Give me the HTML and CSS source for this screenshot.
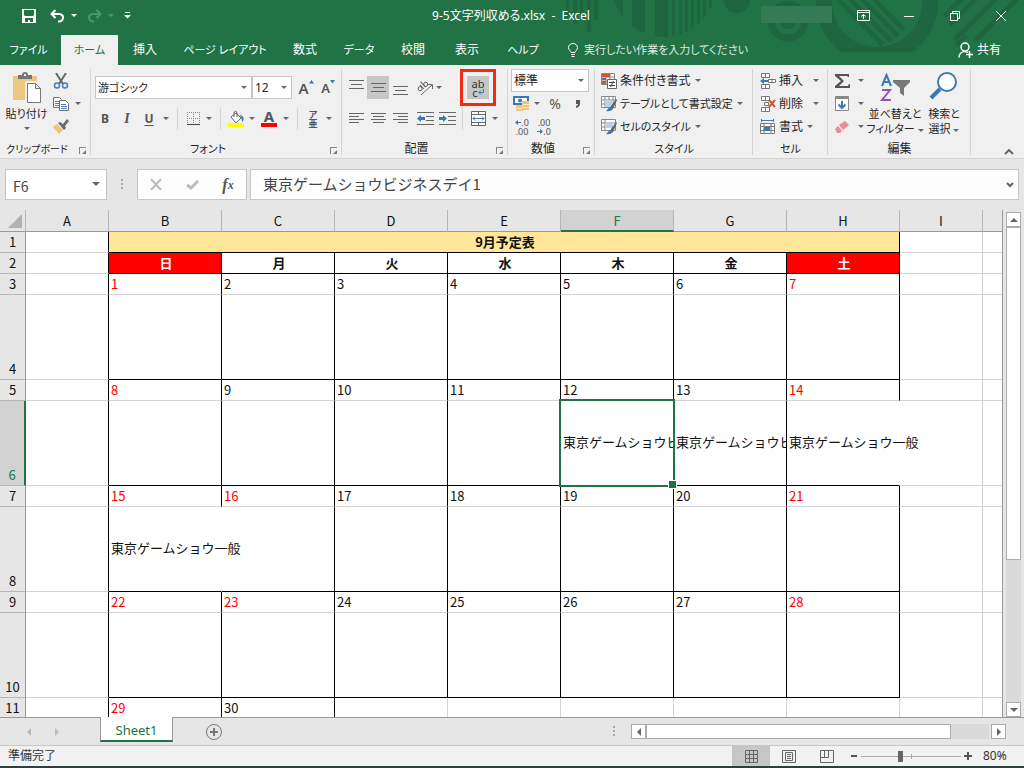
FILE: index.html
```html
<!DOCTYPE html>
<html lang="ja">
<head>
<meta charset="utf-8">
<title>9-5文字列収める.xlsx - Excel</title>
<link rel="stylesheet" href="styles.css">
</head>
<body>
<div class="app">
<header class="top">
  <svg class="deco" width="520" height="56" viewBox="504 0 520 56" fill="#1e6540">
    <path d="M566 0h3v17h-3zM573 0h4v24h-4zM580 0h3v20h-3zM587 0h4v32h-4zM594 0h4v20h-4z"/>
    <clipPath id="disc"><circle cx="664" cy="-15" r="52"/></clipPath>
    <g clip-path="url(#disc)"><path d="M613 0h10v40h-10zM632 0h13v40h-13zM655 0h13v40h-13zM672 0h3v40h-3zM679 0h3v40h-3zM685 0h3v40h-3zM691 0h3v40h-3zM697 0h3v40h-3zM703 0h3v40h-3zM709 0h3v40h-3z"/></g>
    <circle cx="737" cy="0" r="13"/>
    <circle cx="788" cy="21" r="17" fill="none" stroke="#1e6540" stroke-width="7"/><circle cx="788" cy="21" r="8"/>
    <clipPath id="cut"><path d="M800 0h150v52H800z"/></clipPath>
    <g clip-path="url(#cut)"><circle cx="877" cy="2" r="53" fill="none" stroke="#1e6540" stroke-width="16"/></g>
    <path d="M836 0h6l43 43-5 3zM848 0h6l40 40-5 3zM860 0h6l34 34-4 4zM872 0h6l28 28-4 4z"/>
    <path d="M943 14l14-14h7l-18 18zM948 23l23-23h7l-27 27zM953 38l38-38h7l-42 42zM974 38l38-38h7l-42 42zM955 44l10-10 3 3-10 10z"/>
    <path d="M761 6h71v17h-71z" fill="#347a55"/>
  </svg>
  <div class="titlebar">
    <div class="quick">
      <button class="qb save" aria-label="上書き保存"><svg width="14" height="14" viewBox="0 0 14 14"><path fill="#fff" fill-rule="evenodd" d="M0 0h14v14H0zM2 1v5l1 1h8l1-1V1zM3 9v4h3v-2h2v2h3V9z"/></svg></button>
      <button class="qb" aria-label="元に戻す"><svg width="15" height="14" viewBox="0 0 15 14" fill="none" stroke="#fff" stroke-width="2"><path d="M5.500 1L1.500 5l4 4M2 5h7c6 0 5 8-1 7.500"/></svg></button><i class="caret white"></i>
      <button class="qb redo" aria-label="やり直し"><svg width="15" height="14" viewBox="0 0 15 14" fill="none" stroke="#4e9370" stroke-width="2"><path d="M9.500 1l4 4-4 4M13 5H6C0 5 1 13 7 12.500"/></svg></button><i class="caret dim"></i>
      <button class="qb more" aria-label="クイック アクセス"><svg width="7" height="7" viewBox="0 0 7 7" fill="#fff"><path d="M1 0h5v1H1zM0 3h7L3.500 6.500z"/></svg></button>
    </div>
    <h1>9-5文字列収める.xlsx&nbsp; - &nbsp;Excel</h1>
    <div class="win">
      <button aria-label="リボンの表示"><svg width="13" height="11" viewBox="0 0 13 11" fill="none" stroke="#fff"><path d="M.5.5h12v10H.5zM0 2.500h13M6.500 9V4.500M4 6.500l2.500-2 2.500 2"/></svg></button>
      <button aria-label="最小化"><svg width="10" height="10" viewBox="0 0 10 10"><path d="M0 5.500h10" stroke="#fff"/></svg></button>
      <button aria-label="元に戻す (縮小)"><svg width="10" height="10" viewBox="0 0 10 10" fill="none" stroke="#fff"><path d="M.5 2.500h7v7h-7zM2.500 2.500v-2h7v7h-2"/></svg></button>
      <button aria-label="閉じる"><svg width="10" height="10" viewBox="0 0 10 10" stroke="#fff"><path d="M0 0l10 10M10 0L0 10"/></svg></button>
    </div>
  </div>
  <nav class="tabs">
    <button class="t-file kana">ファイル</button><button class="t-home on kana">ホーム</button><button class="t-2">挿入</button><button class="t-layout kana">ページ レイアウト</button><button class="t-2">数式</button><button class="t-2 kana">データ</button><button class="t-2">校閲</button><button class="t-2">表示</button><button class="t-help kana">ヘルプ</button>
    <button class="tell kana"><svg width="10" height="14" viewBox="0 0 10 14" fill="none" stroke="#fff"><path d="M3 9.500C3 8 .5 7 .5 4.500a4.500 4 0 0 1 9 0C9.500 7 7 8 7 9.500zM3 11.500h4M3.500 13.500h3"/></svg>実行したい作業を入力してください</button>
    <button class="share"><svg width="15" height="16" viewBox="0 0 15 16" fill="none" stroke="#fff" stroke-width="1.500"><circle cx="7" cy="5" r="4"/><path d="M1 15.500c0-4 3-6 6-6 1.500 0 2 .5 3 1M8 12.500h7M11.500 9v7"/></svg>共有</button>
  </nav>
</header>

<section class="ribbon">
  <div class="group g-clip">
    <div class="body">
      <button class="big paste kana"><svg width="28" height="31" viewBox="0 0 28 31"><path fill="#ecc57f" d="M0 4h24v24H0z"/><path fill="#767676" d="M5 3h4a3 3 0 0 1 6 0h4v4H5z"/><path fill="#f0f0f0" d="M11 2h2v2h-2zM12 9h16v22H12z"/><path fill="#fff" stroke="#777" d="M14.500 11.500h8l5 5v14h-13zM22.500 11.500v5h5"/></svg><span>貼り付け</span><i class="caret"></i></button>
      <div class="stack">
        <button class="line" aria-label="切り取り"><svg width="16" height="16" viewBox="0 0 16 16" fill="none"><path d="M3 0l7 11M13 0L6 11" stroke="#666" stroke-width="2"/><circle cx="4" cy="12.500" r="2.500" stroke="#4a7fb5" stroke-width="1.500"/><circle cx="12" cy="12.500" r="2.500" stroke="#4a7fb5" stroke-width="1.500"/></svg></button>
        <div class="line"><button aria-label="コピー"><svg width="16" height="14" viewBox="0 0 16 14" fill="#fff" stroke="#707070"><path d="M.5.5h6l2 2v8h-8z"/><path d="M2 4.500h4M2 6.500h4M2 8.500h4" stroke="#4a7fb5"/><path d="M6.500 3.500h6l3 3v7h-9z"/><path d="M8 7.500h5M8 9.500h6M8 11.500h6" stroke="#4a7fb5"/></svg></button><i class="caret"></i></div>
        <button class="line" aria-label="書式のコピー"><svg width="16" height="15" viewBox="0 0 16 15"><path d="M0 8l4-3 6 6-4 4z" fill="#ecc57f"/><path d="M5 4l2-1 3 2 4-5 2 2-4 5 1 2-2 2z" fill="#6a6a6a"/></svg></button>
      </div>
    </div>
    <div class="label small">クリップボード<i class="launch"></i></div>
  </div>

  <div class="group g-font">
    <div class="body rows">
      <div class="row">
        <label class="drop fname kana"><select aria-label="フォント名"><option>游ゴシック</option></select></label><label class="drop fsize"><select aria-label="フォント サイズ"><option>12</option></select></label>
        <button class="ic grow" aria-label="拡大"><b class="a1">A</b><svg width="5" height="4" viewBox="0 0 5 4"><path d="M0 3.500L2.500 0 5 3.500z" fill="#3d78b4"/></svg></button>
        <button class="ic grow" aria-label="縮小"><b class="a2">A</b><svg width="5" height="4" viewBox="0 0 5 4"><path d="M0 0h5L2.500 3.500z" fill="#3d78b4"/></svg></button>
      </div>
      <div class="row">
        <button class="ic bold">B</button><button class="ic ital">I</button><button class="ic under">U</button><i class="caret slot"></i><i class="sep"></i>
        <button class="ic20" aria-label="罫線"><svg width="13" height="13" viewBox="0 0 13 13" stroke="#888" stroke-dasharray="1 1"><path d="M.5 0v12M6.500 0v12M12.500 0v12M0 .5h13M0 6.500h13"/><path d="M0 12.500h13" stroke="#444" stroke-dasharray="none"/></svg></button><i class="caret slot"></i><i class="sep"></i>
        <button class="ic20" aria-label="塗りつぶし"><svg width="16" height="16" viewBox="0 0 16 16"><path d="M3 6l5-4 5 5-5 5z" fill="#fff" stroke="#666"/><path d="M6 6V2a1.500 1.500 0 0 1 3 0v4" fill="none" stroke="#666"/><path d="M12 4c5 1 4 6 2 7 0-3-1-4-2-7z" fill="#3d78b4"/><path d="M0 12h16v4H0z" fill="#ff0"/></svg></button><i class="caret slot"></i>
        <button class="ic fcolor">A</button><i class="caret slot"></i><i class="sep"></i>
        <button class="ic20 ruby"><span>ア</span><span>亜</span></button><i class="caret slot"></i>
      </div>
    </div>
    <div class="label kana">フォント<i class="launch"></i></div>
  </div>

  <div class="group g-align">
    <div class="body rows">
      <div class="row">
        <button class="ic" aria-label="上揃え"><svg width="15" height="15" viewBox="0 0 15 15" stroke="#666"><path d="M0 .5h15M2 4.500h11M0 8.500h15"/></svg></button><button class="ic pressed" aria-label="上下中央"><svg width="15" height="15" viewBox="0 0 15 15" stroke="#666"><path d="M0 3.500h15M2 7.500h11M0 11.500h15"/></svg></button><button class="ic" aria-label="下揃え"><svg width="15" height="15" viewBox="0 0 15 15" stroke="#666"><path d="M0 6.500h15M2 10.500h11M0 14.500h15"/></svg></button>
        <button class="ic orient" aria-label="方向"><svg width="18" height="16" viewBox="0 0 18 16" fill="none" stroke="#666"><path d="M5 15L16 5M12 4.500h4.500V9"/><g transform="rotate(-42 6 7)"><circle cx="3.500" cy="7" r="2"/><path d="M6 4v5.500M8.500 2v7.500"/><circle cx="10.500" cy="7.500" r="2"/></g></svg></button><i class="caret slot tight"></i><i class="gapper"></i>
        <button class="ic pressed wrap" aria-label="折り返して全体を表示する"><span>ab</span><span>c<svg width="6" height="6" viewBox="0 0 6 6" fill="none" stroke="#3d78b4"><path d="M5.500 0v3.500H1M3 1.500L1 3.500l2 2"/></svg></span><i class="mark"></i></button>
      </div>
      <div class="row">
        <button class="ic" aria-label="左揃え"><svg width="15" height="11" viewBox="0 0 15 11" stroke="#666"><path d="M0 .5h15M0 3.500h10M0 6.500h15M0 9.500h10"/></svg></button><button class="ic" aria-label="中央揃え"><svg width="15" height="11" viewBox="0 0 15 11" stroke="#666"><path d="M0 .5h15M2 3.500h11M0 6.500h15M2 9.500h11"/></svg></button><button class="ic" aria-label="右揃え"><svg width="15" height="11" viewBox="0 0 15 11" stroke="#666"><path d="M0 .5h15M5 3.500h10M0 6.500h15M5 9.500h10"/></svg></button>
        <button class="ic orient" aria-label="インデント減"><svg width="17" height="14" viewBox="0 0 17 14" stroke="#666"><path d="M0 .5h17M9 4.500h8M9 8.500h8M0 12.500h17"/><path d="M0 6.500L4 3v2h4v3H4v2z" fill="#3d78b4" stroke="none"/></svg></button><button class="ic" aria-label="インデント増"><svg width="17" height="14" viewBox="0 0 17 14" stroke="#666"><path d="M0 .5h17M9 4.500h8M9 8.500h8M0 12.500h17"/><path d="M8 6.500L4 3v2H0v3h4v2z" fill="#3d78b4" stroke="none"/></svg></button><i class="sep s4"></i>
        <button class="ic" aria-label="セルを結合"><svg width="15" height="15" viewBox="0 0 15 15" fill="#fff" stroke="#666"><path d="M.5.5h14v14H.5zM0 3.500h15M0 11.500h15M7.500 0v3.500M7.500 11.500V15"/><path d="M2 7.500h11M4 5.500l-2 2 2 2M11 5.500l2 2-2 2" fill="none" stroke="#3d78b4"/></svg></button><i class="caret slot"></i>
      </div>
    </div>
    <div class="label">配置<i class="launch"></i></div>
  </div>

  <div class="group g-num">
    <div class="body rows r3">
      <label class="drop fmt"><select aria-label="表示形式"><option>標準</option></select></label>
      <div class="row"><button class="ic20" aria-label="通貨"><svg width="16" height="15" viewBox="0 0 16 15"><path d="M1 1h14v7H1z" fill="#fff" stroke="#3d78b4" stroke-width="2"/><circle cx="7" cy="4.500" r="2" fill="#3d78b4"/><path d="M9 5h7v9H9zM3 9h7v6H3z" fill="#ecc57f"/><path d="M9 8.500h7M9 11.500h7M3 12.500h6" stroke="#f7ead0"/></svg></button><i class="caret slot"></i><button class="ic pct">%</button><button class="ic" aria-label="桁区切り"><svg width="6" height="8" viewBox="0 0 6 8"><path d="M1 0h4v3c0 3-1 4-4 5V6c1-.5 2-1 2-2H1z" fill="#555"/></svg></button></div>
      <div class="row"><button class="ic dec"><span><svg width="6" height="5" viewBox="0 0 6 5"><path d="M0 2.500L3 0v2h3v1H3v2z" fill="#3d78b4"/></svg>.0</span><span>.00</span></button><button class="ic dec"><span>.00</span><span><svg width="6" height="5" viewBox="0 0 6 5"><path d="M6 2.500L3 0v2H0v1h3v2z" fill="#3d78b4"/></svg>.0</span></button></div>
    </div>
    <div class="label">数値<i class="launch"></i></div>
  </div>

  <div class="group g-style">
    <div class="body rows r3">
      <button class="cmd"><svg width="16" height="16" viewBox="0 0 16 16"><path d="M.5.5h13v11H.5zM5 0v12M9 0v12M0 4h14M0 8h14" fill="#fff" stroke="#888"/><path d="M1 1h8v3H1zM1 8h4v3H1z" fill="#d35230"/><path d="M1 5h4v2H1z" fill="#3d78b4"/><path d="M6.500 6.500h9v9h-9z" fill="#fff" stroke="#666"/><path d="M8 9.500h6M8 12.500h6M12.500 8l-3 6" stroke="#444"/></svg>条件付き書式<i class="caret"></i></button>
      <button class="cmd kana"><svg width="16" height="16" viewBox="0 0 16 16"><path d="M.5.5h14v11H.5zM4 0v12M8 0v12M12 0v12M0 4h15M0 8h15" fill="#fff" stroke="#888"/><path d="M4 4h8v7H4z" fill="#b8d2ea"/><path d="M15 3l-5 7-3 4c3 1 5 0 6-3l3-7z" fill="#666"/><path d="M5 15c2-1 2-4 5-4 2 2 0 5-5 4z" fill="#3d78b4"/></svg>テーブルとして書式設定<i class="caret"></i></button>
      <button class="cmd kana"><svg width="16" height="16" viewBox="0 0 16 16"><path d="M.5.5h14v11H.5zM4 0v12M0 4h15M0 8h4" fill="#fff" stroke="#888"/><path d="M4 4h8v5H4z" fill="#b8d2ea"/><path d="M15 3l-5 7-3 4c3 1 5 0 6-3l3-7z" fill="#666"/><path d="M5 15c2-1 2-4 5-4 2 2 0 5-5 4z" fill="#3d78b4"/></svg>セルのスタイル<i class="caret"></i></button>
    </div>
    <div class="label kana">スタイル</div>
  </div>

  <div class="group g-cells">
    <div class="body rows r3">
      <button class="cmd wide"><svg width="16" height="16" viewBox="0 0 16 16" fill="#fff" stroke="#777"><path d="M1.500.5h8v4h-8zM5.500 0v4.500M1.500 11.500h8v4h-8zM5.500 11v4.500M8.500 6.500h7v3h-7zM12 6v4"/><path d="M0 8l4-3v2h4v2H4v2z" fill="#3d78b4" stroke="none"/></svg>挿入<i class="caret"></i></button>
      <button class="cmd wide"><svg width="16" height="16" viewBox="0 0 16 16" fill="#fff" stroke="#777"><path d="M1.500.5h8v4h-8zM5.500 0v4.500M1.500 11.500h8v4h-8zM5.500 11v4.500M4.500 6.500h4v3h-4z"/><path d="M9 4l6 7M15 4l-6 7" stroke="#d6532c" stroke-width="2"/></svg>削除<i class="caret"></i></button>
      <button class="cmd"><svg width="16" height="16" viewBox="0 0 16 16" fill="#fff" stroke="#777"><path d="M.5 4.500h14v10H.5zM4 4v11M11 4v11M0 7.500h15M0 11.500h15"/><path d="M4 8h6v4H4z" fill="#3d78b4" stroke="none"/><path d="M1 1.500h13M1.500 0v3M13.500 0v3" stroke="#3d78b4"/></svg>書式<i class="caret"></i></button>
    </div>
    <div class="label kana">セル</div>
  </div>

  <div class="group g-edit">
    <div class="body">
      <div class="rows r3 edit3">
        <button class="cmd ed" aria-label="合計"><svg width="16" height="14" viewBox="0 0 16 14"><path d="M0 0h14v3h-1L12 2H4l5 5-5 5h9l1-2h1v4H0v-2l6-5-6-5z" fill="#555"/></svg><i class="caret"></i></button>
        <button class="cmd ed" aria-label="フィル"><svg width="14" height="15" viewBox="0 0 14 15"><path d="M.5.5h13v14H.5z" fill="#fff" stroke="#888"/><path d="M1 1h12v2H1z" fill="#888"/><path d="M7 5v7M3.500 8.500L7 12l3.500-3.500" fill="none" stroke="#3d78b4" stroke-width="2"/></svg><i class="caret"></i></button>
        <button class="cmd ed" aria-label="クリア"><svg width="14" height="12" viewBox="0 0 14 12"><path d="M4 4l6-4 4 4-6 5z" fill="#ea8a9b"/><path d="M0 8l3-3 4 5-2 2H2z" fill="#ea8a9b"/></svg><i class="caret"></i></button>
      </div>
      <button class="big sort kana"><svg width="30" height="30" viewBox="0 0 30 30" fill="none"><path d="M2 13L6.500 2 11 13M3.500 9h6" stroke="#3d78b4" stroke-width="2"/><path d="M2 17h8L2 27h9" stroke="#9055b0" stroke-width="2"/><path d="M13 7h17v2l-6 6v8l-4-3v-5l-7-6z" fill="#777"/></svg><span>並べ替えと<br>フィルター<i class="caret"></i></span></button>
      <button class="big find kana"><svg width="30" height="30" viewBox="0 0 30 30" fill="none" stroke="#3d78b4"><circle cx="18" cy="11" r="9" fill="#fff" stroke-width="2"/><path d="M11 18L2 27" stroke-width="4"/></svg><span>検索と<br>選択<i class="caret"></i></span></button>
    </div>
    <div class="label">編集</div>
  </div>
  <button class="collapse" aria-label="リボンを折りたたむ"><svg width="10" height="6" viewBox="0 0 10 6" fill="none" stroke="#666" stroke-width="2"><path d="M1 5l4-4 4 4"/></svg></button>
</section>

<section class="fbar">
  <label class="drop namebox"><input aria-label="名前ボックス" value="F6"></label>
  <i class="dots"></i>
  <div class="fbtns">
    <button aria-label="キャンセル"><svg width="12" height="11" viewBox="0 0 12 11" stroke="#bbb" stroke-width="2"><path d="M1 0l10 11M11 0L1 11"/></svg></button>
    <button aria-label="入力"><svg width="13" height="10" viewBox="0 0 13 10" fill="none" stroke="#bbb" stroke-width="3"><path d="M1 5l4 3 7-7"/></svg></button>
    <button class="fx">f<small>x</small></button>
  </div>
  <div class="fin"><input aria-label="数式バー" value="東京ゲームショウビジネスデイ1"><svg width="8" height="6" viewBox="0 0 8 6" fill="none" stroke="#666" stroke-width="2"><path d="M1 1l3 3 3-3"/></svg></div>
</section>

<main class="sheet">
  <div class="gridwrap">
  <table class="grid">
    <colgroup><col class="c-h"><col class="c-a"><col class="c-d"><col class="c-d"><col class="c-d"><col class="c-d"><col class="c-d"><col class="c-d"><col class="c-d"><col class="c-a"><col></colgroup>
    <thead><tr><th class="corner"><svg width="14" height="14" viewBox="0 0 14 14"><path d="M14 0v14H0z" fill="#b2b2b2"/></svg></th><th>A</th><th>B</th><th>C</th><th>D</th><th>E</th><th class="cur">F</th><th>G</th><th>H</th><th>I</th><th></th></tr></thead>
    <tbody>
    <tr class="k"><th>1</th><td></td><td class="title" colspan="7">9月予定表</td><td></td><td></td></tr>
    <tr class="k days"><th>2</th><td></td><td class="hol">日</td><td>月</td><td>火</td><td>水</td><td>木</td><td>金</td><td class="hol">土</td><td></td><td></td></tr>
    <tr><th>3</th><td></td><td class="red">1</td><td>2</td><td>3</td><td>4</td><td>5</td><td>6</td><td class="red">7</td><td></td><td></td></tr>
    <tr class="k tall"><th>4</th><td></td><td></td><td></td><td></td><td></td><td></td><td></td><td></td><td></td><td></td></tr>
    <tr><th>5</th><td></td><td class="red">8</td><td>9</td><td>10</td><td>11</td><td>12</td><td>13</td><td class="red">14</td><td></td><td></td></tr>
    <tr class="k tall"><th class="cur">6</th><td></td><td></td><td></td><td></td><td></td><td class="sel"><div class="clip">東京ゲームショウビジネスデイ1</div><i class="cursor"></i></td><td><div class="clip">東京ゲームショウビジネスデイ2</div></td><td class="spill">東京ゲームショウ一般</td><td></td><td></td></tr>
    <tr><th>7</th><td></td><td class="red">15</td><td class="red">16</td><td>17</td><td>18</td><td>19</td><td>20</td><td class="red">21</td><td></td><td></td></tr>
    <tr class="k tall"><th>8</th><td></td><td class="spill">東京ゲームショウ一般</td><td></td><td></td><td></td><td></td><td></td><td></td><td></td><td></td></tr>
    <tr><th>9</th><td></td><td class="red">22</td><td class="red">23</td><td>24</td><td>25</td><td>26</td><td>27</td><td class="red">28</td><td></td><td></td></tr>
    <tr class="k tall"><th>10</th><td></td><td></td><td></td><td></td><td></td><td></td><td></td><td></td><td></td><td></td></tr>
    <tr class="last"><th>11</th><td></td><td class="red">29</td><td>30</td><td></td><td></td><td></td><td></td><td></td><td></td><td></td></tr>
    </tbody>
  </table>
  </div>
  <div class="vscroll"><button aria-label="上へ"><i class="tri up"></i></button><i class="thumb"></i><i class="track"></i><button aria-label="下へ"><i class="tri down"></i></button></div>
</main>

<section class="sheetbar">
  <div class="navs"><i class="tri left pale"></i><i class="tri right pale"></i></div>
  <button class="stab">Sheet1</button>
  <button class="add" aria-label="新しいシート"><svg width="16" height="16" viewBox="0 0 16 16" fill="none" stroke="#777"><circle cx="8" cy="8" r="7.500"/><path d="M8 4v8M4 8h8" stroke-width="2"/></svg></button>
  <i class="dots"></i>
  <div class="hscroll"><button aria-label="左へ"><i class="tri left"></i></button><i class="thumb"></i><i class="track"></i><button aria-label="右へ"><i class="tri right"></i></button></div>
</section>
<footer class="status">
  <span class="ready">準備完了</span>
  <button class="view on" aria-label="標準"><svg width="13" height="13" viewBox="0 0 13 13" fill="none" stroke="#666"><path d="M.5.5h12v12H.5zM4.500 0v13M8.500 0v13M0 4.500h13M0 8.500h13"/></svg></button>
  <button class="view" aria-label="ページ レイアウト"><svg width="14" height="13" viewBox="0 0 14 13" fill="none" stroke="#666"><path d="M.5.5h13v12H.5zM3.500 2.500h7v8h-7zM5 4.500h4M5 6.500h4M5 8.500h4"/></svg></button>
  <button class="view" aria-label="改ページ プレビュー"><svg width="14" height="13" viewBox="0 0 14 13" fill="none" stroke="#666"><path d="M.5.5h13v12H.5zM.5 7.500h8V.5M4.500 0v7.500"/></svg></button>
  <button class="zoomb" aria-label="縮小"><svg width="6" height="6" viewBox="0 0 6 6"><path d="M0 3h6" stroke="#555" stroke-width="2"/></svg></button>
  <input type="range" aria-label="ズーム" min="0" max="100" value="39">
  <button class="zoomb" aria-label="拡大"><svg width="8" height="8" viewBox="0 0 8 8"><path d="M0 4h8M4 0v8" stroke="#555" stroke-width="2"/></svg></button>
  <span class="pctv">80%</span>
</footer>
</div>
</body>
</html>
```
FILE: styles.css
```css
* { box-sizing: border-box; }
body {
  margin: 0;
  font-family: "Noto Sans", "Noto Sans CJK JP", sans-serif;
  font-size: 12px;
  line-height: 16px;
  color: #262626;
  font-feature-settings: "palt";
}
button, input, select {
  margin: 0; padding: 0; border: 0; background: none;
  font: inherit; color: inherit; font-feature-settings: inherit;
}
button { display: flex; align-items: center; justify-content: center; white-space: nowrap; }
svg { display: block; flex: none; }
i { font-style: normal; flex: none; }
.kana { font-size: 11px; }
.small { font-size: 10px; }

.app { display: flex; flex-direction: column; height: 100vh; min-width: 1000px; overflow: hidden; border-bottom: 2px solid #2c4040; }

/* title and tabs */
.top { position: relative; background: #217346; color: #fff; flex: none; }
.deco { position: absolute; right: 0; top: 0; }
.titlebar { position: relative; display: flex; align-items: center; height: 35px; padding-bottom: 4px; }
.quick { display: flex; align-items: center; flex: 1; padding-left: 22px; }
.qb + .caret { margin: 0 6px 0 6px; }
.qb.save { margin-right: 14px; }
.qb.redo { margin-left: 4px; }
.qb.more { margin-left: 4px; }
h1 { margin: 0 24px 0 0; font-size: 12px; font-weight: 400; white-space: nowrap; }
.win { display: flex; flex: 1; justify-content: flex-end; }
.win button { width: 46px; height: 24px; }
.tabs { position: relative; display: flex; height: 30px; }
.tabs button { justify-content: center; }
.t-file { width: 61px; padding-right: 4px; }
.t-home { width: 57px; }
.tabs .on { background: #f0f0f0; color: #217346; }
.t-2 { width: 54px; }
.t-layout { width: 106px; }
.t-help { width: 58px; }
.tabs .tell { margin-left: 16px; gap: 6px; color: #dcebe2; }
.tabs .share { margin-left: auto; margin-right: 23px; gap: 4px; }

.caret {
  display: inline-block; width: 0; height: 0;
  border: 3px solid transparent; border-top-color: #666; border-bottom: 0;
}
.caret.white { border-top-color: #fff; }
.caret.dim { border-top-color: #4e9370; }
.caret.slot { margin: 0 3px; }
.caret.tight { margin: 0; }

/* ribbon */
.ribbon { display: flex; flex: none; height: 94px; padding-top: 4px; background: #f0f0f0; border-bottom: 1px solid #d2d2d2; }
.group { display: flex; flex-direction: column; flex: none; position: relative; }
.group::after { content: ""; position: absolute; right: 0; top: 0; width: 1px; height: 86px; background: #d4d4d4; }
.g-clip { width: 91px; }
.g-font { width: 251px; }
.g-align { width: 166px; }
.g-num { width: 87px; }
.g-style { width: 158px; }
.g-cells { width: 75px; }
.g-edit { width: 143px; }
.body { display: flex; height: 71px; }
.body.rows { flex-direction: column; padding: 7px 0 0 3px; gap: 8px; }
.body.rows.r3, .rows.r3 { padding-top: 0; gap: 0; display: flex; flex-direction: column; }
.row { display: flex; align-items: center; height: 23px; }
.label { display: flex; justify-content: center; align-items: center; height: 18px; margin-top: 1px; padding-right: 17px; position: relative; }
.g-style .label, .g-cells .label, .g-edit .label { padding-right: 0; }
.launch { position: absolute; right: 5px; bottom: 4px; width: 7px; height: 7px; border-left: 1px solid #888; border-top: 1px solid #888; }
.launch::after { content: ""; position: absolute; right: 0; bottom: 0; border: 2px solid transparent; border-right-color: #777; border-bottom-color: #777; }
.ic { width: 22px; height: 23px; flex: none; color: #555; }
.ic20 { width: 20px; height: 23px; flex: none; }
.sep { width: 1px; height: 22px; margin: 0 5px; background: #d4d4d4; }
.s4 { margin: 0 4px; }
.gapper { width: 25px; }
.orient { margin-left: 3px; }
.pressed { background: #c6c6c6; }
.big { flex-direction: column; justify-content: flex-start; text-align: center; line-height: 15px; }
.big .caret { vertical-align: middle; }
.paste { width: 53px; padding-top: 3px; gap: 2px; }
.paste .caret { margin-top: 4px; }
.paste span { padding-top: 1px; }
.stack { display: flex; flex-direction: column; }
.line { display: flex; align-items: center; justify-content: flex-start; width: 34px; height: 23px; }
.line .caret { margin-left: 6px; }
.drop { position: relative; display: flex; background: #fff; border: 1px solid #c6c6c6; height: 23px; }
.drop::after { content: ""; position: absolute; right: 4px; top: 9px; border: 3px solid transparent; border-top-color: #666; border-bottom: 0; }
.drop select, .drop input { appearance: none; width: 100%; padding-left: 2px; outline: 0; }
.fname { width: 157px; margin-left: 1px; }
.fsize { width: 40px; margin-right: 3px; }
.fmt { width: 78px; height: 23px; }
.grow { align-items: center; gap: 0; }
.grow svg { align-self: flex-start; margin-top: 4px; }
.grow b { font-weight: 600; line-height: 20px; }
.a1 { font-size: 15px; }
.a2 { font-size: 13px; }
.bold { font-weight: 700; }
.ital { font-family: "Liberation Serif", serif; font-style: italic; font-weight: 700; font-size: 14px; }
.under { font-weight: 700; text-decoration: underline; text-underline-offset: 2px; }
.fcolor { width: 16px; height: 17px; margin: 0 3px; font-size: 15px; line-height: 13px; font-weight: 700; border-bottom: 4px solid #f00; }
.ruby { flex-direction: column; color: #555; line-height: 9px; font-size: 9px; font-weight: 700; }
.wrap { position: relative; flex-direction: column; font-size: 11px; line-height: 9px; color: #333; }
.wrap span { display: flex; align-items: center; }
.mark { position: absolute; inset: -7px; border: 3px solid #f32b12; }
.pct { font-size: 14px; width: 24px; }
.dec { flex-direction: column; font-size: 9px; line-height: 9px; align-items: center; }
.dec span { display: flex; align-items: center; }
.cmd { height: 23px; gap: 3px; justify-content: flex-start; padding-left: 3px; }
.cmd .caret { margin-left: 1px; }
.cmd.wide .caret { margin-left: 7px; }
.g-cells .cmd { padding-left: 4px; }
.edit3 { width: 40px; padding-left: 4px; }
.cmd.ed .caret { margin-left: auto; margin-right: 4px; }
.sort { width: 54px; padding-top: 4px; gap: 3px; }
.find { width: 44px; padding-top: 2px; gap: 5px; }
.big span .caret { margin-left: 3px; }
.collapse { margin: auto 10px 3px auto; }

/* formula bar */
.fbar { display: flex; flex: none; height: 51px; padding: 10px 5px; background: #e6e6e6; color: #444; font-family: "Noto Sans CJK JP", sans-serif; }
.fbar .namebox { width: 102px; height: 31px; }
.namebox::after { right: 6px; top: 12px; border-width: 4px 4px 0; }
.namebox input { padding: 2px 0 0 7px; font-size: 14px; }
.dots { width: 2px; height: 10px; margin: 10px 14px; background: repeating-linear-gradient(#aaa 0 2px, transparent 2px 4px); }
.fbtns { display: flex; width: 110px; background: #fdfdfd; border: 1px solid #c6c6c6; margin-right: 3px; }
.fbtns button { width: 36px; }
.fx { font-family: "Liberation Serif", serif; font-style: italic; font-weight: 700; font-size: 16px; color: #555; }
.fx small { font-size: 12px; }
.fin { display: flex; flex: 1; align-items: center; background: #fdfdfd; border: 1px solid #c6c6c6; padding: 0 4px 0 12px; }
.fin input { flex: 1; font-size: 15px; height: 26px; padding-bottom: 3px; outline: 0; font-feature-settings: normal; }

/* worksheet */
.sheet { display: flex; flex: 1; min-height: 0; background: #e6e6e6; font-family: "Noto Sans CJK JP", sans-serif; font-feature-settings: normal; }
.gridwrap { flex: 1; overflow: hidden; }
.grid { width: 100%; table-layout: fixed; border-collapse: separate; border-spacing: 0; background: #fff; font-size: 13px; line-height: 18px; border-right: 1px solid #999; color: #111; }
.c-h { width: 26px; }
.c-a { width: 83px; }
.c-d { width: 113px; }
.grid tr { height: 21px; }
.grid thead tr { height: 22px; }
.grid tr.tall { height: 85px; }
.grid th { padding: 0; font-weight: 400; background: #e6e6e6; border-right: 1px solid #b5b5b5; border-bottom: 1px solid #999; vertical-align: bottom; }
.grid thead th { vertical-align: middle; }
.grid thead th:last-child { border-right: 0; }
.grid tbody th { padding-bottom: 1px; border-right-color: #999; border-bottom-color: #b5b5b5; }
.grid .corner { padding-left: 8px; }
.grid .cur { background: #d2d2d2; color: #217346; }
.grid thead .cur { padding-top: 1px; border-bottom: 2px solid #217346; }
.grid tbody .cur { border-right: 2px solid #217346; }
.grid td { padding: 0 0 0 2px; border-right: 1px solid #000; border-bottom: 1px solid #d4d4d4; white-space: nowrap; }
.grid .k td { border-bottom-color: #000; }
.grid .tall td { padding-bottom: 2px; }
.grid tr td:nth-last-child(-n+2) { border-right-color: #d4d4d4; border-bottom-color: #d4d4d4; }
.grid td:last-child { border-right: 0; }
.grid tr.k th + td { border-bottom-color: #d4d4d4; }
.grid .last td:nth-child(n+5) { border-right-color: #d4d4d4; }
.grid .title { background: #ffe699; text-align: center; font-weight: 700; font-size: 13px; }
.grid .days td { text-align: center; font-weight: 700; }
.grid .hol { background: #f00; color: #fff; }
.grid .red { color: #f00; }
.grid .spill { border-right-color: transparent; overflow: visible; }
.clip { overflow: hidden; }
.sel { position: relative; }
.cursor { position: absolute; inset: -2px; border: 2px solid #217346; }
.cursor::after { content: ""; position: absolute; right: -4px; bottom: -4px; width: 7px; height: 7px; background: #217346; border: 1px solid #fff; }

.tri { display: block; width: 0; height: 0; border: 4px solid transparent; }
.up { border-bottom-color: #666; border-top: 0; }
.down { border-top-color: #666; border-bottom: 0; }
.left { border-right-color: #666; border-left: 0; }
.right { border-left-color: #666; border-right: 0; }
.left.pale { border-right-color: #bbb; }
.right.pale { border-left-color: #bbb; }
.vscroll { display: flex; flex-direction: column; width: 21px; padding: 2px 3px 0; }
.vscroll button, .hscroll button { flex: none; width: 15px; height: 15px; background: #fff; border: 1px solid #ababab; }
.thumb { background: #fff; border: 1px solid #ababab; }
.track { background: #dadada; }
.vscroll .thumb { flex: 333; }
.vscroll .track { flex: 143; }

.sheetbar { display: flex; flex: none; height: 28px; background: #e6e6e6; border-top: 1px solid #999; }
.navs { display: flex; align-items: center; gap: 24px; width: 100px; padding-left: 27px; }
.stab { width: 73px; height: 25px; margin-top: -1px; padding-top: 3px; background: #fff; color: #217346; font-size: 13px; border: 1px solid #999; border-top: 0; border-bottom: 2px solid #217346; }
.add { margin-left: 33px; }
.sheetbar .dots { margin: 8px 16px 0 auto; }
.hscroll { display: flex; width: 375px; height: 15px; margin: 6px 18px 0 0; }
.hscroll .thumb { flex: 303; }
.hscroll .track { flex: 38; margin-right: 2px; }

.status { display: flex; flex: none; align-items: center; height: 21px; background: #f2f2f2; border-top: 1px solid #c6c6c6; color: #333; }
.ready { flex: 1; padding-left: 8px; }
.view { width: 38px; height: 20px; }
.view.on { background: #c6c6c6; }
.zoomb { width: 14px; height: 20px; }
.view + .zoomb { margin-left: 1px; }
.status input { appearance: none; width: 100px; height: 11px; background: linear-gradient(#aaa, #aaa) 0 5px / 100% 1px no-repeat, linear-gradient(#aaa, #aaa) 50px 3px / 1px 5px no-repeat; }
.status input::-webkit-slider-thumb { appearance: none; width: 5px; height: 11px; background: #666; }
.pctv { width: 49px; padding-left: 8px; }
```
